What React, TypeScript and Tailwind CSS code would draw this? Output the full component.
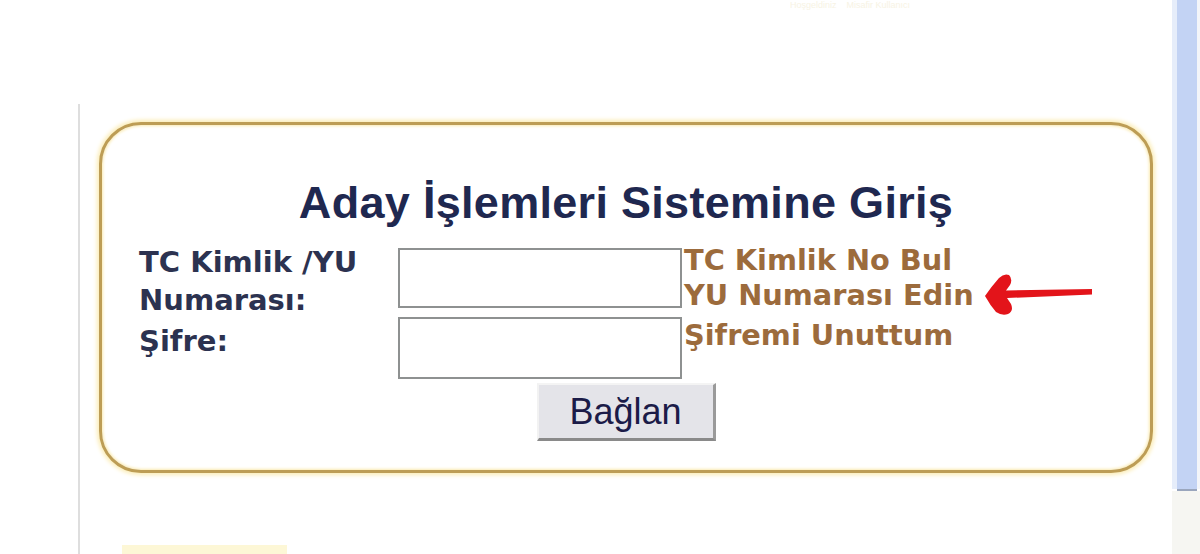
import React from "react";

const dv = { fontFamily: '"DejaVu Sans", Verdana, sans-serif' };
const lib = { fontFamily: '"Liberation Sans", Arial, sans-serif' };

function Arrow() {
  return (
    <svg
      className="absolute left-[982px] top-[273px]"
      width="112"
      height="44"
      viewBox="0 0 112 44"
    >
      <path
        d="M3 23 Q9 14 17 5 Q22 0 27 2 Q31 6 28 12 L24 17.5 L110 16 L110 21.5 L25 25 L29 31 Q32 38 26 41 Q20 43 14 39 Q8 32 3 23 Z"
        fill="#e3141a"
      />
    </svg>
  );
}

export default function App() {
  return (
    <div className="relative flex h-[554px] w-[1200px] overflow-hidden bg-white">
      {/* main column */}
      <div className="flex w-[1172px] flex-col">
        <div className="h-[104px] shrink-0">
          <div
            className="ml-[790px] text-[9px] leading-[10px] text-[#f7f3e4]"
            style={lib}
          >
            Hoşgeldiniz &nbsp;&nbsp; Misafir Kullanıcı
          </div>
        </div>
        <div className="ml-[78px] flex flex-1 flex-col border-l-2 border-[#dedede] pl-[19px] pt-[18px]">
          <div className="flex h-[351px] w-[1054px] shrink-0 flex-col rounded-[42px] border-[3px] border-[#bd9d55] bg-white shadow-[0_0_4px_2px_#fbecb4,inset_0_0_3px_1px_#faeab0]">
            <h1
              className="mt-[53px] text-center text-[45px] font-bold leading-[50px] tracking-[0.3px] text-[#1f2850]"
              style={lib}
            >
              Aday İşlemleri Sistemine Giriş
            </h1>
            <div className="mt-[12px] flex flex-col pl-[37px]" style={dv}>
              {/* row 1 */}
              <div className="flex h-[77px]">
                <div className="w-[259px] pt-[3px] text-[29px] font-bold leading-[38px] text-[#2c3250]">
                  TC Kimlik /YU
                  <br />
                  Numarası:
                </div>
                <div className="w-[284px] pt-[8px]">
                  <input
                    type="text"
                    className="h-[60px] w-[284px] border-2 border-[#8e9191] bg-white outline-none"
                  />
                </div>
                <div className="ml-[2px] pt-[3px] text-[28.8px] font-bold leading-[35px] text-[#9c6b3c]">
                  TC Kimlik No Bul
                  <br />
                  YU Numarası Edin
                </div>
              </div>
              {/* row 2 */}
              <div className="flex h-[62px]">
                <div className="w-[259px] pt-[5px] text-[29px] font-bold leading-[38px] text-[#2c3250]">
                  Şifre:
                </div>
                <div className="w-[284px]">
                  <input
                    type="password"
                    className="h-[62px] w-[284px] border-2 border-[#8e9191] bg-white outline-none"
                  />
                </div>
                <div className="ml-[2px] pt-[1px] text-[28.8px] font-bold leading-[35px] text-[#9c6b3c]">
                  Şifremi Unuttum
                </div>
              </div>
            </div>
            <div className="mt-[4px] flex justify-center">
              <button
                className="flex h-[58px] w-[179px] items-center justify-center border-b-[3px] border-l-2 border-r-[3px] border-t-2 border-b-[#8a8a8a] border-l-[#f2f2f2] border-r-[#9a9a9a] border-t-[#f4f4f4] bg-[#e4e4e9] text-[36px] text-[#1b1b48]"
                style={lib}
              >
                Bağlan
              </button>
            </div>
          </div>
          <div className="ml-[23px] mt-[72px] h-[12px] w-[165px] shrink-0 bg-[#fdf7d6]" />
        </div>
      </div>
      {/* right scroll strip */}
      <div className="flex w-[28px] flex-col">
        <div className="flex h-[489px]">
          <div className="w-[5px] bg-[#e6edfa]" />
          <div className="w-[20px] bg-[#c3d3f4]" />
          <div className="w-[3px] bg-[#f3f5f9]" />
        </div>
        <div className="ml-[5px] h-[2px] w-[20px] bg-[#9aa6bd]" />
        <div className="flex-1 bg-[#f6f6f2]" />
      </div>
      <Arrow />
    </div>
  );
}
